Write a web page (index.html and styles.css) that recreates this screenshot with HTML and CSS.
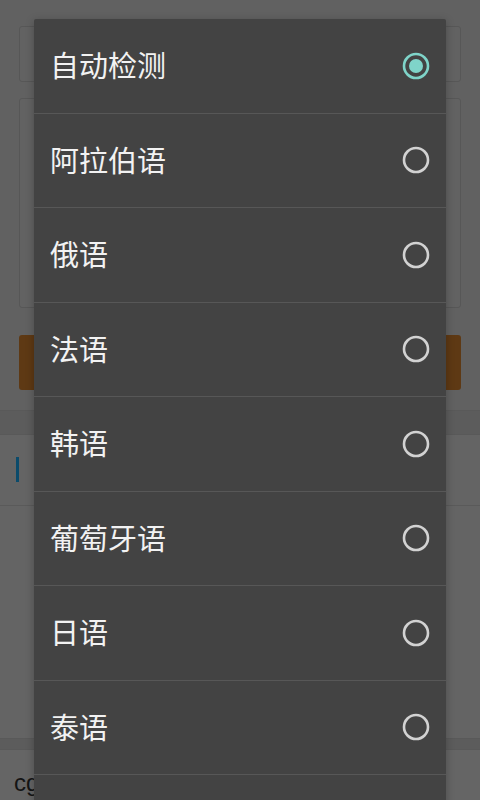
FILE: index.html
```html
<!DOCTYPE html>
<html lang="zh">
<head>
<meta charset="utf-8">
<link rel="stylesheet" href="styles.css">
</head>
<body>
<div class="page">
  <div class="bg">
    <div class="card card-1"></div>
    <div class="card card-2"></div>
    <div class="btn"></div>
    <div class="band band-1"></div>
    <div class="section"><span class="bar"></span></div>
    <div class="area"></div>
    <div class="band band-2"></div>
    <div class="footer">cg</div>
  </div>

  <div class="dialog">
    <div class="row"><span class="label">自动检测</span>
      <svg class="radio" viewBox="0 0 28 28"><circle cx="14" cy="14" r="12" fill="none" stroke="#7fd4c9" stroke-width="2.6"/><circle cx="14" cy="14" r="7" fill="#7fd4c9"/></svg></div>
    <div class="row"><span class="label">阿拉伯语</span>
      <svg class="radio" viewBox="0 0 28 28"><circle cx="14" cy="14" r="12" fill="none" stroke="#d2d2d2" stroke-width="2.6"/></svg></div>
    <div class="row"><span class="label">俄语</span>
      <svg class="radio" viewBox="0 0 28 28"><circle cx="14" cy="14" r="12" fill="none" stroke="#d2d2d2" stroke-width="2.6"/></svg></div>
    <div class="row"><span class="label">法语</span>
      <svg class="radio" viewBox="0 0 28 28"><circle cx="14" cy="14" r="12" fill="none" stroke="#d2d2d2" stroke-width="2.6"/></svg></div>
    <div class="row"><span class="label">韩语</span>
      <svg class="radio" viewBox="0 0 28 28"><circle cx="14" cy="14" r="12" fill="none" stroke="#d2d2d2" stroke-width="2.6"/></svg></div>
    <div class="row"><span class="label">葡萄牙语</span>
      <svg class="radio" viewBox="0 0 28 28"><circle cx="14" cy="14" r="12" fill="none" stroke="#d2d2d2" stroke-width="2.6"/></svg></div>
    <div class="row"><span class="label">日语</span>
      <svg class="radio" viewBox="0 0 28 28"><circle cx="14" cy="14" r="12" fill="none" stroke="#d2d2d2" stroke-width="2.6"/></svg></div>
    <div class="row"><span class="label">泰语</span>
      <svg class="radio" viewBox="0 0 28 28"><circle cx="14" cy="14" r="12" fill="none" stroke="#d2d2d2" stroke-width="2.6"/></svg></div>
    <div class="row"></div>
  </div>
</div>
</body>
</html>
```

FILE: styles.css
```css
* { box-sizing: border-box; }
html, body { margin: 0; padding: 0; }
body { background: #616161; }

.page {
  position: relative;
  width: 480px;
  height: 800px;
  overflow: hidden;
  background: #616161;
  font-family: "Noto Sans CJK SC", "Noto Sans", sans-serif;
}

.bg {
  display: flex;
  flex-direction: column;
  padding-top: 26px;
  height: 800px;
}

.card {
  margin: 0 19px;
  border: 1px solid #575757;
  border-radius: 3px;
  background: #626262;
}
.card-1 { height: 56px; }
.card-2 { height: 210px; margin-top: 16px; }

.btn {
  margin: 27px 19px 0;
  height: 55px;
  border-radius: 3px;
  background: #5e3914;
}

.band {
  background: #5c5c5c;
  border-top: 1px solid #595959;
  border-bottom: 1px solid #595959;
}
.band-1 { margin-top: 20px; height: 25px; }
.band-2 { height: 12px; }

.section {
  height: 71px;
  background: #646464;
  border-bottom: 1px solid #5a5a5a;
  padding: 22px 0 0 16px;
}
.bar {
  display: block;
  width: 3px;
  height: 25px;
  background: #0b4b6b;
}

.area {
  height: 232px;
  background: #646464;
}

.footer {
  flex: 1;
  background: #656565;
  font-family: "Liberation Sans", Arial, sans-serif;
  font-size: 24px;
  color: #141414;
  padding: 19px 0 0 14px;
  line-height: 28px;
}

.dialog {
  position: absolute;
  left: 34px;
  top: 19px;
  width: 412px;
  background: #434343;
  border-radius: 2px 2px 0 0;
  box-shadow: 0 2px 8px rgba(0, 0, 0, 0.25);
}

.row {
  display: flex;
  align-items: center;
  justify-content: space-between;
  height: 94.5px;
  padding: 0 16px 0 16px;
  border-bottom: 1px solid #575757;
}

.label {
  color: #f2f2f2;
  font-size: 29px;
  line-height: 1;
  padding-bottom: 2px;
}

.radio {
  width: 28px;
  height: 28px;
  flex: none;
}
```
